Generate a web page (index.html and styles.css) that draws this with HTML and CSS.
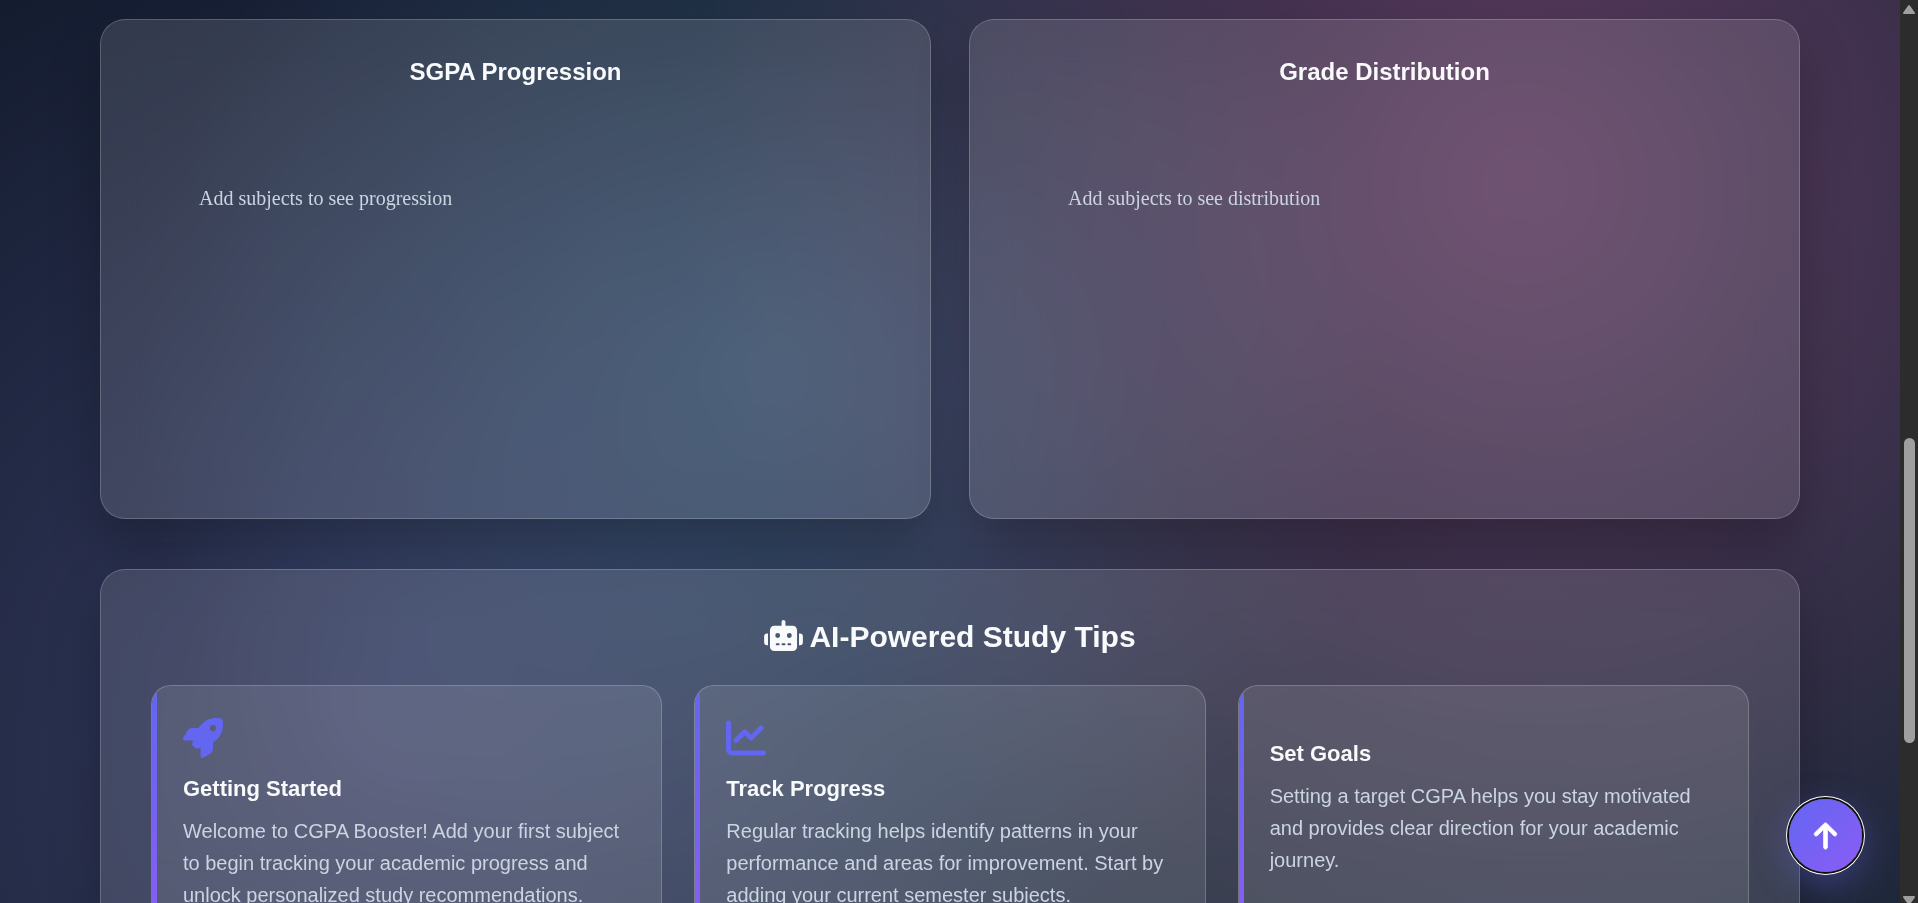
FILE: index.html
```html
<!DOCTYPE html>
<html lang="en">
<head>
<meta charset="utf-8">
<title>CGPA Booster</title>
<link rel="stylesheet" href="styles.css">
</head>
<body>
<div class="viewport">
  <main class="page">
    <section class="charts">
      <article class="panel chart">
        <h3 class="chart-title">SGPA Progression</h3>
        <p class="chart-empty">Add subjects to see progression</p>
      </article>
      <article class="panel chart">
        <h3 class="chart-title">Grade Distribution</h3>
        <p class="chart-empty">Add subjects to see distribution</p>
      </article>
    </section>

    <section class="panel tips">
      <h2 class="tips-title">
        <svg class="robot" viewBox="0 0 640 512" aria-hidden="true"><path fill-rule="evenodd" d="M320 0c17.700 0 32 14.300 32 32V96H472c39.800 0 72 32.200 72 72V440c0 39.800-32.200 72-72 72H168c-39.800 0-72-32.200-72-72V168c0-39.800 32.200-72 72-72H288V32c0-17.700 14.300-32 32-32zM208 384a16 16 0 0 0 0 32h32a16 16 0 0 0 0-32zM304 384a16 16 0 0 0 0 32h32a16 16 0 0 0 0-32zM400 384a16 16 0 0 0 0 32h32a16 16 0 0 0 0-32zM264 256a40 40 0 1 0-80 0 40 40 0 1 0 80 0zM456 256a40 40 0 1 0-80 0 40 40 0 1 0 80 0zM48 224H64V416H48a48 48 0 0 1-48-48V272a48 48 0 0 1 48-48zM592 224a48 48 0 0 1 48 48v96a48 48 0 0 1-48 48H576V224z"/></svg>
        AI-Powered Study Tips
      </h2>
      <div class="tips-grid">
        <article class="tip">
          <svg class="tip-icon" viewBox="0 0 512 512" aria-hidden="true"><path d="M156.600 384.900L125.700 354c-8.500-8.500-11.500-20.800-7.700-32.200c3-8.900 7-20.500 11.800-33.800L24 288c-8.600 0-16.600-4.600-20.900-12.100s-4.200-16.700 .2-24.100l52.500-88.500c13-21.900 36.500-35.300 61.900-35.300l82.300 0c2.400-4 4.800-7.700 7.200-11.300C289.100-4.100 411.100-8.100 483.900 5.300c11.600 2.100 20.600 11.200 22.800 22.800c13.400 72.900 9.300 194.800-111.400 276.700c-3.500 2.400-7.300 4.800-11.300 7.200v82.300c0 25.400-13.400 49-35.300 61.900l-88.500 52.500c-7.400 4.400-16.600 4.500-24.100 .2s-12.100-12.200-12.100-20.900V380.800c-14.100 4.900-26.400 8.900-35.700 11.900c-11.200 3.600-23.400 .5-31.800-7.800zM384 168a40 40 0 1 0 0-80 40 40 0 1 0 0 80z"/></svg>
          <h4 class="tip-title">Getting Started</h4>
          <p class="tip-text">Welcome to CGPA Booster! Add your first subject to begin tracking your academic progress and unlock personalized study recommendations.</p>
        </article>
        <article class="tip">
          <svg class="tip-icon" viewBox="0 0 512 512" aria-hidden="true"><path d="M64 64c0-17.700-14.300-32-32-32S0 46.300 0 64V400c0 44.200 35.800 80 80 80H480c17.700 0 32-14.300 32-32s-14.300-32-32-32H80c-8.800 0-16-7.200-16-16V64zm406.600 86.600c12.500-12.500 12.500-32.800 0-45.300s-32.800-12.500-45.300 0L320 210.700l-57.400-57.400c-12.500-12.500-32.800-12.500-45.300 0l-112 112c-12.500 12.500-12.500 32.800 0 45.300s32.800 12.500 45.300 0L240 221.300l57.400 57.400c12.500 12.500 32.800 12.500 45.300 0l128-128z"/></svg>
          <h4 class="tip-title">Track Progress</h4>
          <p class="tip-text">Regular tracking helps identify patterns in your performance and areas for improvement. Start by adding your current semester subjects.</p>
        </article>
        <article class="tip">
          <div class="tip-icon tip-icon-blank"></div>
          <h4 class="tip-title">Set Goals</h4>
          <p class="tip-text">Setting a target CGPA helps you stay motivated and provides clear direction for your academic journey.</p>
        </article>
      </div>
    </section>

    <button class="to-top" type="button" aria-label="Back to top">
      <svg class="arrow" viewBox="0 0 384 512" aria-hidden="true"><path d="M214.600 41.400c-12.500-12.500-32.800-12.500-45.300 0l-160 160c-12.500 12.500-12.500 32.800 0 45.300s32.800 12.500 45.300 0L160 141.200V448c0 17.700 14.300 32 32 32s32-14.300 32-32V141.200L329.400 246.600c12.500 12.500 32.800 12.500 45.300 0s12.500-32.800 0-45.300l-160-160z"/></svg>
    </button>
  </main>

  <div class="scrollbar" aria-hidden="true">
    <svg class="scroll-arrow" viewBox="0 0 18 18"><path d="M9 6L14 13H4z"/></svg>
    <div class="scroll-track"><div class="scroll-thumb"></div></div>
    <svg class="scroll-arrow" viewBox="0 0 18 18"><path d="M4 12H14L9 19z"/></svg>
  </div>
</div>
</body>
</html>
```
FILE: styles.css
```css
* {
  box-sizing: border-box;
  margin: 0;
}

body {
  font-family: "Liberation Sans", Arial, sans-serif;
  color: #f8fafc;
  background: #0f172a;
}

.viewport {
  display: flex;
  height: 100vh;
  overflow: hidden;
}

.page {
  position: relative;
  flex: 1;
  min-width: 0;
  overflow: hidden;
  padding: 19px 100px 0;
  background:
    radial-gradient(circle at 20% 80%, rgba(120, 119, 198, 0.3) 0%, transparent 50%),
    radial-gradient(circle at 80% 20%, rgba(255, 119, 198, 0.3) 0%, transparent 50%),
    radial-gradient(circle at 40% 40%, rgba(120, 219, 255, 0.2) 0%, transparent 50%),
    linear-gradient(135deg, #131b2e 0%, #1c2739 100%);
}

.panel {
  border: 1px solid rgba(255, 255, 255, 0.2);
  border-radius: 25px;
  background: rgba(255, 255, 255, 0.12);
  box-shadow: 0 25px 50px rgba(0, 0, 0, 0.25);
  backdrop-filter: blur(20px);
}

.charts {
  display: grid;
  grid-template-columns: 1fr 1fr;
  gap: 38px;
  margin-bottom: 50px;
}

.chart {
  height: 500px;
  padding: 38px;
}

.chart-title {
  font-size: 24px;
  line-height: 28px;
  text-align: center;
}

.chart-empty {
  margin: 100px 60px 0;
  font-family: "Liberation Serif", "Times New Roman", serif;
  font-size: 20px;
  line-height: 24px;
  color: #cbd5e1;
}

.tips {
  padding: 50px;
}

.tips-title {
  display: flex;
  justify-content: center;
  align-items: flex-start;
  gap: 6px;
  margin-bottom: 31px;
  font-size: 30px;
  line-height: 34px;
}

.robot {
  width: 39px;
  height: 31px;
  fill: currentColor;
}

.tips-grid {
  display: grid;
  grid-template-columns: repeat(3, 1fr);
  gap: 32px;
}

.tip {
  position: relative;
  padding: 32px 31px;
  overflow: hidden;
  border: 1px solid rgba(255, 255, 255, 0.2);
  border-radius: 20px;
  background: rgba(255, 255, 255, 0.1);
}

.tip::before {
  content: "";
  position: absolute;
  inset: 0 auto 0 0;
  width: 5px;
  background: linear-gradient(180deg, #6366f1, #8b5cf6);
}

.tip-icon {
  display: block;
  width: 40px;
  height: 40px;
  margin-bottom: 18px;
  fill: #6366f1;
}

.tip-icon-blank {
  height: 5px;
}

.tip-title {
  margin-bottom: 14px;
  font-size: 22px;
  line-height: 25px;
}

.tip-text {
  font-size: 20px;
  line-height: 32px;
  color: #cbd5e1;
}

.to-top {
  position: absolute;
  right: 38px;
  bottom: 31px;
  display: grid;
  place-items: center;
  width: 73px;
  height: 73px;
  padding: 0;
  border: 0;
  border-radius: 50%;
  background: linear-gradient(135deg, #6366f1, #8b5cf6);
  box-shadow: 0 0 0 2px #101010, 0 0 0 3px #fff, 0 10px 37px rgba(99, 102, 241, 0.4);
}

.arrow {
  width: 23px;
  height: 30px;
  overflow: visible;
  fill: #fff;
  stroke: #fff;
  stroke-width: 14px;
}

.scrollbar {
  display: flex;
  flex-direction: column;
  width: 18px;
  background: #2c2c2c;
}

.scroll-arrow {
  width: 18px;
  height: 18px;
  fill: #9f9f9f;
  stroke: #9f9f9f;
  stroke-width: 2px;
  stroke-linejoin: round;
}

.scroll-track {
  flex: 1;
  padding: 420px 3px 0 4px;
}

.scroll-thumb {
  height: 305px;
  border-radius: 6px;
  background: #9f9f9f;
}
```
